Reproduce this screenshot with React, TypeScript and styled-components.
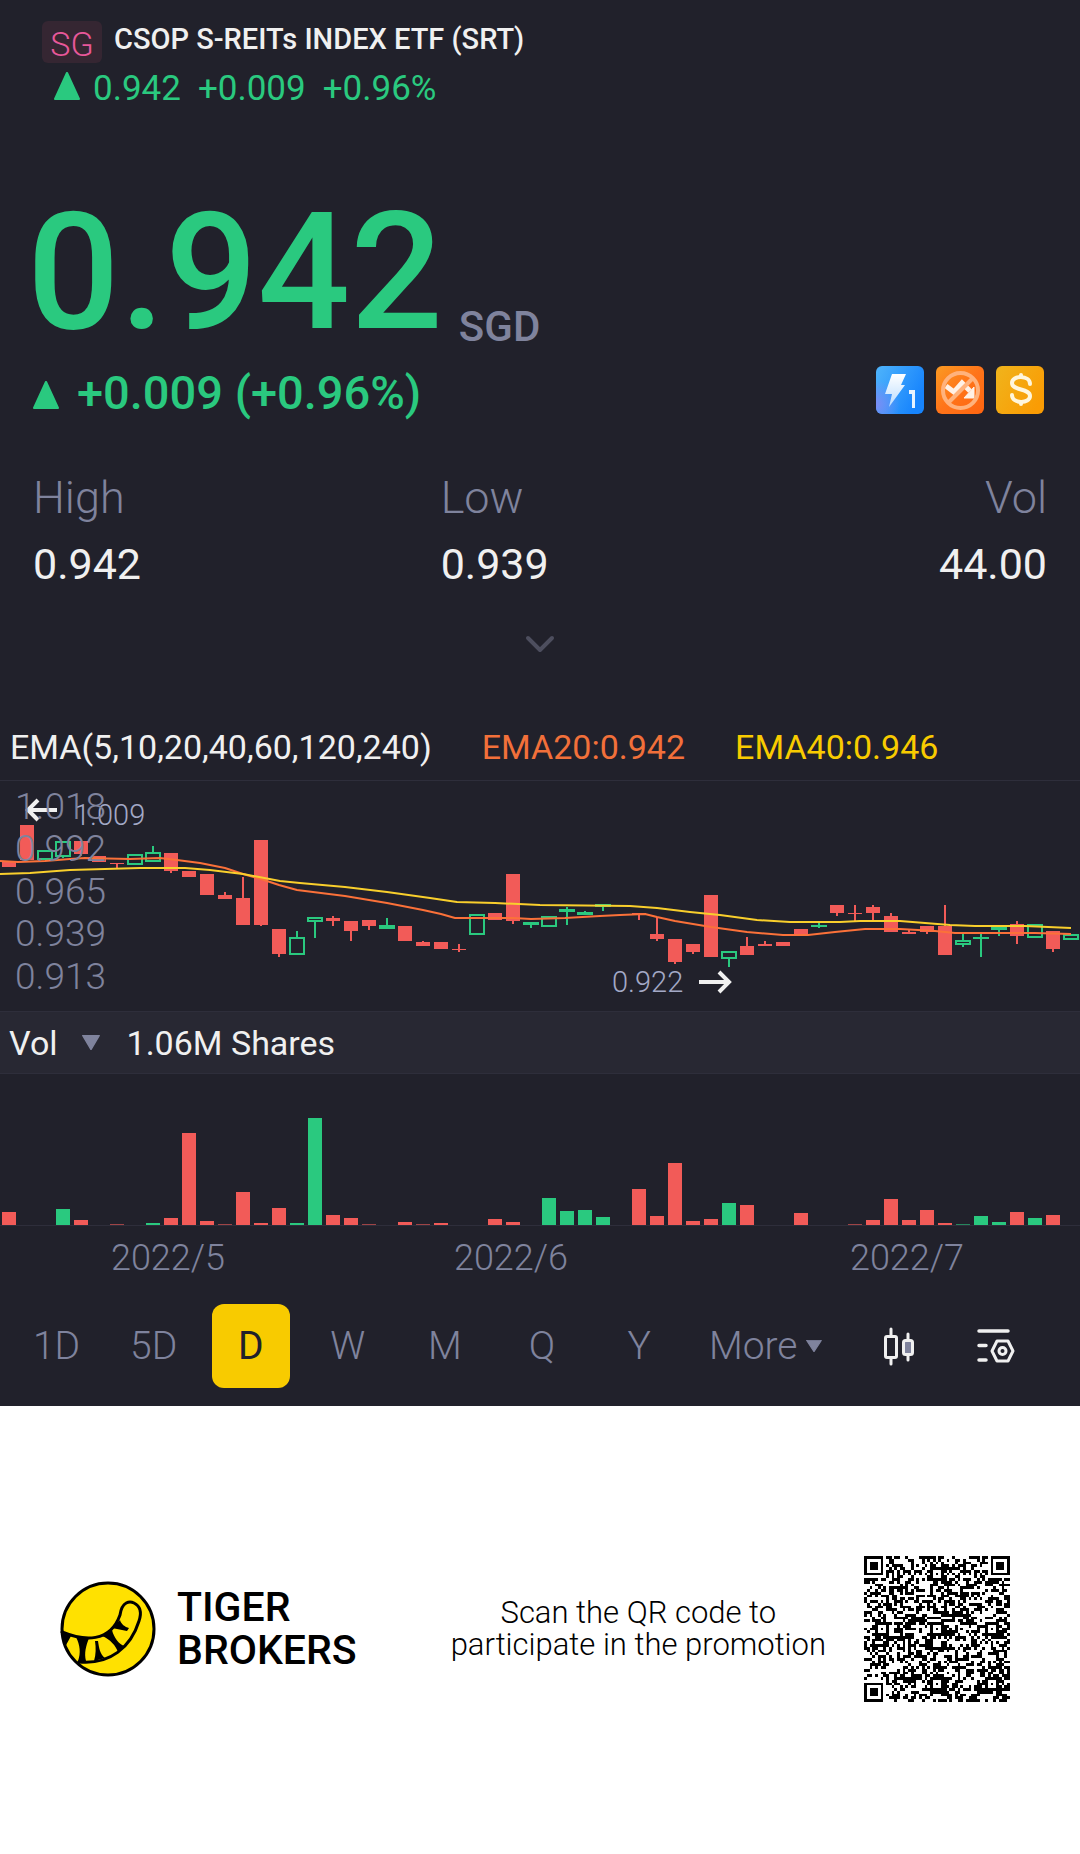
import React from "react";
import styled, { createGlobalStyle } from "styled-components";

const color = {
  bg: "#21212b",
  band: "#282833",
  line: "#2e2e3b",
  muted: "#7f839d",
  mark: "#a3a9c6",
  text: "#f0f0f0",
  up: "#2ac97f",
  down: "#f25b58",
  orange: "#f2703a",
  yellow: "#f8cb00",
};

const font = `Roboto, "Noto Sans", "Liberation Sans", sans-serif`;

const GlobalStyle = createGlobalStyle`
  * { box-sizing: border-box; }
  body { margin: 0; background: #fff; font-family: ${font}; }
  h1, p, dl, dt, dd { margin: 0; font-weight: inherit; }
  button { font: inherit; color: inherit; background: none; border: 0; padding: 0; cursor: pointer; }
  svg { display: block; flex: none; }
`;

const Panel = styled.main`
  background: ${color.bg};
  color: ${color.text};
`;

const TopBar = styled.header`
  padding: 21px 42px 0;
`;

const TitleRow = styled.div`
  display: flex;
  align-items: flex-start;
  gap: 12px;
`;

const Market = styled.span`
  width: 60px;
  height: 42px;
  border-radius: 6px;
  background: #352632;
  color: #e8589a;
  font-size: 34px;
  font-weight: 300;
  line-height: 46px;
  text-align: center;
`;

const Title = styled.h1`
  font-size: 29px;
  font-weight: 500;
  line-height: 36px;
`;

const Ticker = styled.div`
  display: flex;
  align-items: baseline;
  gap: 17px;
  margin-top: 5px;
  padding-left: 12px;
  color: ${color.up};
  font-size: 35px;
  font-weight: 400;
  line-height: 42px;
`;

const Arrowed = styled.span`
  display: inline-flex;
  align-items: baseline;
  gap: 13px;
`;

const Quote = styled.section`
  padding: 77px 36px 0 27px;
`;

const PriceRow = styled.div`
  display: flex;
  align-items: flex-end;
  gap: 16px;
`;

const Price = styled.p`
  color: ${color.up};
  font-size: 163px;
  font-weight: 500;
  line-height: 172px;
`;

const Currency = styled.span`
  color: ${color.muted};
  font-size: 42px;
  font-weight: 500;
  line-height: 64px;
`;

const ChangeRow = styled.div`
  display: flex;
  align-items: flex-start;
  justify-content: space-between;
  height: 60px;
  margin-top: 2px;
`;

const Change = styled.div`
  display: flex;
  align-items: baseline;
  gap: 18px;
  padding-left: 6px;
  color: ${color.up};
  font-size: 47px;
  font-weight: 500;
  line-height: 64px;
`;

const Badges = styled.div`
  display: flex;
  gap: 12px;
  padding-top: 5px;
`;

const Stats = styled.dl`
  display: grid;
  grid-template-columns: 80fr 60fr 59fr;
  padding: 43px 33px 0;
`;

const Stat = styled.div<{ $end?: boolean }>`
  text-align: ${(p) => (p.$end ? "right" : "left")};
  line-height: 67px;
`;

const StatName = styled.dt`
  color: ${color.muted};
  font-size: 45px;
  font-weight: 300;
`;

const StatValue = styled.dd`
  font-size: 43px;
  font-weight: 400;
`;

const Expand = styled.button`
  display: flex;
  align-items: center;
  justify-content: center;
  width: 100%;
  height: 92px;
`;

const Legend = styled.div`
  display: flex;
  align-items: center;
  gap: 50px;
  height: 91px;
  padding: 24px 10px 0;
  border-bottom: 1px solid ${color.line};
  font-size: 34px;
  line-height: 40px;
  white-space: nowrap;
`;

const Tint = styled.span<{ $c: string }>`
  color: ${(p) => p.$c};
`;

const Chart = styled.svg`
  width: 100%;
  height: auto;
`;

const VolumeBar = styled.div`
  display: flex;
  align-items: center;
  height: 63px;
  padding: 0 9px;
  background: ${color.band};
  border-top: 1px solid ${color.line};
  border-bottom: 1px solid ${color.line};
  font-size: 34px;
  line-height: 60px;
`;

const VolumePick = styled.button`
  display: flex;
  align-items: center;
  gap: 24px;
  margin-right: 27px;
`;

const Periods = styled.nav`
  display: grid;
  grid-template-columns: repeat(7, 97fr) 163fr repeat(2, 97fr);
  align-items: center;
  justify-items: center;
  padding: 16px 35px 18px 8px;
`;

const Period = styled.button<{ $on?: boolean }>`
  display: flex;
  align-items: center;
  justify-content: center;
  gap: 8px;
  min-width: 78px;
  height: 84px;
  border-radius: 12px;
  background: ${(p) => (p.$on ? color.yellow : "transparent")};
  color: ${(p) => (p.$on ? color.bg : color.muted)};
  font-size: 39px;
  font-weight: ${(p) => (p.$on ? 400 : 300)};
  line-height: 84px;
`;

const MorePeriods = styled(Period)`
  padding-right: 8px;
`;

const Footer = styled.footer`
  display: flex;
  align-items: center;
  gap: 38px;
  padding: 150px 70px 152px 60px;
  background: #fff;
  color: #000;
`;

const Brand = styled.div`
  display: flex;
  align-items: center;
  gap: 21px;
  margin-right: auto;
  font-size: 41px;
  font-weight: 500;
  line-height: 43px;
`;

const Invite = styled.p`
  font-size: 31px;
  font-weight: 300;
  line-height: 32px;
  text-align: center;
`;

const Triangle = ({ w, h, down, fill }: { w: number; h: number; down?: boolean; fill: string }) => (
  <svg width={w} height={h} viewBox="0 0 24 28" preserveAspectRatio="none" aria-hidden="true">
    <path
      d={down ? "M1 1H23L12 27Z" : "M1 27H23L12 1Z"}
      fill={fill}
      stroke={fill}
      strokeWidth="2"
      strokeLinejoin="round"
    />
  </svg>
);

type Candle = [number, "r" | "g", number, number, number, number];

// index, colour, wick top, body top, body bottom, wick bottom
const candles: Candle[] = [
  [0, "r", 142, 142, 147, 147], [1, "r", 105, 105, 140, 140], [2, "g", 130, 130, 140, 140],
  [3, "g", 121, 121, 137, 138], [4, "r", 121, 121, 134, 136], [5, "r", 136, 136, 142, 142],
  [6, "r", 143, 143, 144, 148], [7, "g", 134, 134, 145, 145], [8, "g", 126, 132, 142, 142],
  [9, "r", 133, 133, 151, 153], [10, "r", 151, 151, 157, 157], [11, "r", 154, 154, 175, 175],
  [12, "r", 172, 175, 179, 179], [13, "r", 157, 178, 205, 205], [14, "r", 120, 120, 205, 206],
  [15, "r", 209, 209, 234, 237], [16, "g", 211, 217, 235, 235], [17, "g", 197, 197, 202, 218],
  [18, "r", 196, 198, 201, 206], [19, "r", 201, 201, 211, 221], [20, "r", 200, 200, 206, 210],
  [21, "g", 198, 205, 209, 209], [22, "r", 206, 206, 221, 221], [23, "r", 221, 222, 226, 226],
  [24, "r", 222, 222, 229, 229], [25, "r", 224, 229, 230, 232], [26, "g", 194, 194, 215, 215],
  [27, "r", 193, 193, 200, 200], [28, "r", 154, 154, 201, 204], [29, "g", 202, 202, 205, 208],
  [30, "g", 196, 196, 207, 207], [31, "g", 187, 189, 192, 205], [32, "g", 191, 192, 195, 195],
  [33, "g", 184, 184, 187, 191], [35, "r", 193, 193, 195, 200], [36, "r", 197, 214, 219, 221],
  [37, "r", 219, 219, 242, 244], [38, "r", 224, 224, 232, 234], [39, "r", 175, 175, 237, 237],
  [40, "g", 231, 231, 239, 247], [41, "r", 217, 226, 235, 235], [42, "r", 221, 224, 226, 226],
  [43, "r", 222, 222, 226, 226], [44, "r", 209, 209, 216, 216], [45, "g", 203, 205, 207, 208],
  [46, "r", 185, 185, 193, 196], [47, "r", 185, 193, 194, 201], [48, "r", 185, 187, 193, 201],
  [49, "r", 193, 196, 212, 212], [50, "r", 210, 212, 214, 214], [51, "r", 206, 206, 212, 214],
  [52, "r", 185, 206, 235, 235], [53, "g", 214, 220, 225, 227], [54, "g", 214, 217, 219, 237],
  [55, "g", 205, 207, 210, 216], [56, "r", 201, 204, 216, 224], [57, "g", 204, 204, 218, 218],
  [58, "r", 211, 211, 229, 232], [59, "g", 214, 214, 220, 220],
];

const ema20 =
  "0,141 18,142 45,141 70,139 85,138 130,139 160,138 177,140 200,143 225,148 243,154 261,159 279,165 297,170 345,176 387,183 423,190 441,194 455,198 513,198 531,199 565,198 600,196 620,195 645,194 657,197 675,201 693,204 711,207 747,212 783,215 808,215 835,212 865,209 900,209 918,210 935,211 955,213 1035,213 1071,214";
const ema40 =
  "0,154 30,153 70,150 140,148 185,148 210,150 243,154 280,161 300,163 345,167 387,172 430,178 457,182 495,183 540,185 630,186 657,188 690,192 720,195 757,200 790,202 840,202 860,201 900,201 925,203 950,205 975,206 1025,206 1071,208";

// index, colour, height
const volumes: [number, "r" | "g", number][] = [
  [0, "r", 13], [3, "g", 16], [4, "r", 5], [6, "r", 1], [8, "g", 2], [9, "r", 7], [10, "r", 92],
  [11, "r", 4], [12, "r", 1], [13, "r", 33], [14, "r", 2], [15, "r", 17], [16, "g", 2],
  [17, "g", 107], [18, "r", 10], [19, "r", 7], [20, "r", 1], [22, "r", 3], [23, "r", 1],
  [24, "r", 2], [27, "r", 6], [28, "r", 3], [30, "g", 27], [31, "g", 14], [32, "g", 15],
  [33, "g", 8], [35, "r", 36], [36, "r", 9], [37, "r", 62], [38, "r", 4], [39, "r", 6],
  [40, "g", 22], [41, "r", 20], [44, "r", 12], [47, "r", 1], [48, "r", 5], [49, "r", 26],
  [50, "r", 5], [51, "r", 15], [52, "r", 2], [53, "g", 1], [54, "g", 9], [55, "g", 3],
  [56, "r", 13], [57, "g", 7], [58, "r", 10],
];

const CandleMark = ({ c }: { c: Candle }) => {
  const [i, kind, wt, bt, bb, wb] = c;
  const x = 9 + 18 * i;
  const tone = kind === "r" ? color.down : color.up;
  const hollow = kind === "g" && bb - bt > 4;
  return (
    <g fill={tone} stroke="none">
      {wt < bt && <rect x={x - 1} y={wt} width="2" height={bt - wt} />}
      {wb > bb && <rect x={x - 1} y={bb} width="2" height={wb - bb} />}
      {hollow ? (
        <rect x={x - 7} y={bt + 1} width="14" height={bb - bt - 2} fill="none" stroke={tone} strokeWidth="2" />
      ) : (
        <rect x={kind === "g" ? x - 8 : x - 7} y={bt} width={kind === "g" ? 16 : 14} height={bb - bt} />
      )}
    </g>
  );
};

const PriceChart = () => (
  <Chart viewBox="0 61 1080 230" role="img" aria-label="Daily candles with EMA20 and EMA40">
    {candles.map((c) => (
      <CandleMark key={c[0]} c={c} />
    ))}
    <g fill="none" strokeWidth="2" strokeLinejoin="round">
      <polyline points={ema20} stroke="#fb7139" />
      <polyline points={ema40} stroke="#f9cf2c" />
    </g>
    <g fontFamily={font} fontWeight="300">
      <g stroke={color.text} strokeWidth="4" fill="none">
        <path d="M57 90H30M38 80L28 90L38 100" />
        <path d="M699 262H728M719 252L729 262L719 272" />
      </g>
      <g fontSize="29" fill={color.mark}>
        <text x="74" y="105">1.009</text>
        <text x="612" y="272">0.922</text>
      </g>
      <g fontSize="37" fill={color.muted}>
        <text x="15" y="99">1.018</text>
        <text x="15" y="141">0.992</text>
        <text x="15" y="184">0.965</text>
        <text x="15" y="226">0.939</text>
        <text x="15" y="269">0.913</text>
      </g>
    </g>
  </Chart>
);

const VolumeChart = () => (
  <Chart viewBox="0 0 1080 214" role="img" aria-label="Daily volume">
    {volumes.map(([i, kind, h]) => (
      <rect
        key={i}
        x={2 + 18 * i}
        y={151 - h}
        width="14"
        height={h}
        fill={kind === "r" ? color.down : color.up}
        opacity={h < 2 ? 0.6 : 1}
      />
    ))}
    <rect x="0" y="151" width="1080" height="1" fill={color.line} />
    <g fontFamily={font} fontWeight="300" fontSize="36" fill={color.muted} textAnchor="middle">
      <text x="168" y="196">2022/5</text>
      <text x="511" y="196">2022/6</text>
      <text x="907" y="196">2022/7</text>
    </g>
  </Chart>
);

const LevelIcon = () => (
  <svg width="48" height="48" viewBox="0 0 48 48" role="img" aria-label="Level 1 quotes">
    <defs>
      <linearGradient id="lv" x1="0" y1="0" x2="1" y2="0.5">
        <stop offset="0" stopColor="#4fb4fb" />
        <stop offset="1" stopColor="#1784fd" />
      </linearGradient>
      <radialGradient id="lv2" cx="0" cy="0.8" r="0.5">
        <stop offset="0" stopColor="#7a8cf5" />
        <stop offset="1" stopColor="#7a8cf5" stopOpacity="0" />
      </radialGradient>
      <linearGradient id="lv3" x1="0" y1="0" x2="0" y2="1">
        <stop offset="0" stopColor="#fff" />
        <stop offset="1" stopColor="#b8dcff" />
      </linearGradient>
    </defs>
    <rect width="48" height="48" rx="6" fill="url(#lv)" />
    <rect width="48" height="48" rx="6" fill="url(#lv2)" />
    <path d="M16 8H30L25 19H29L13 41L16 28H9Z" fill="url(#lv3)" />
    <path d="M33 24H39V42H36V28H33Z" fill="#e8f4ff" />
  </svg>
);

const NoShortIcon = () => (
  <svg width="48" height="48" viewBox="0 0 48 48" role="img" aria-label="No short selling">
    <defs>
      <linearGradient id="ns" x1="0" y1="0" x2="1" y2="1">
        <stop offset="0" stopColor="#fb9a22" />
        <stop offset="0.5" stopColor="#ff7419" />
        <stop offset="1" stopColor="#ff6410" />
      </linearGradient>
    </defs>
    <rect width="48" height="48" rx="6" fill="url(#ns)" />
    <path d="M10 20L18 26L26 17L34 25" fill="none" stroke="#fff1e6" strokeWidth="5" />
    <path d="M38 21V32H28Z" fill="#fff1e6" stroke="#fff1e6" strokeWidth="1" />
    <g fill="none" stroke="#ffb27c" strokeWidth="4">
      <circle cx="24.500" cy="24.500" r="17.500" />
      <path d="M37 12L12 37" />
    </g>
  </svg>
);

const DollarIcon = () => (
  <svg width="48" height="48" viewBox="0 0 48 48" role="img" aria-label="Dividends">
    <defs>
      <linearGradient id="dl" x1="0" y1="0" x2="1" y2="0.6">
        <stop offset="0" stopColor="#f0b41c" />
        <stop offset="1" stopColor="#fa9c04" />
      </linearGradient>
    </defs>
    <rect width="48" height="48" rx="6" fill="url(#dl)" />
    <g fill="none" stroke="#fff6dc" strokeWidth="4" strokeLinecap="round">
      <path d="M34 18C34 9 16 9 16 17C16 25 34 22 34 30C34 38 16 38 16 29" />
      <path d="M25 9V11M25 36V38" />
    </g>
  </svg>
);

const CandleIcon = () => (
  <svg width="32" height="40" viewBox="0 0 32 40" fill="none" stroke="#f0f0f0" strokeWidth="3" strokeLinecap="round" aria-hidden="true">
    <path d="M8 3V9M8 33V38M25 8V14M25 30V34" />
    <rect x="2.500" y="10.500" width="11" height="21" rx="1.500" />
    <rect x="20.500" y="14.500" width="9" height="14" rx="2" fill={color.muted} />
  </svg>
);

const SettingsIcon = () => (
  <svg width="38" height="36" viewBox="0 0 38 36" fill="none" stroke="#f0f0f0" strokeWidth="3.500" strokeLinecap="round" strokeLinejoin="round" aria-hidden="true">
    <path d="M2 3H31M2 17.500H9M2 32H9" />
    <path d="M20 13H31L36 23L31 33H20L15 23Z" strokeWidth="3" />
    <circle cx="25.500" cy="23" r="3.500" strokeWidth="3" />
  </svg>
);

const TigerLogo = () => (
  <svg width="96" height="96" viewBox="0 0 96 96" aria-hidden="true">
    <circle cx="48" cy="48" r="46" fill="#ffe100" />
    <g fill="none" stroke="#000" strokeWidth="3" strokeLinecap="round" strokeLinejoin="round">
      <path d="M2 51C24 60 50 62 60 34C62 20 70 20 74 22C82 26 81 34 79 40C71 66 50 84 19 81" />
    </g>
    <path d="M2 50L11 55L5 66ZM16 56L29 57C26 65 24 72 26 80L18 80C21 72 20 64 16 56ZM35 60L38 60C39 67 40 73 45 77L34 80C36 73 36 67 35 60ZM42 55L52 49C54 57 59 63 64 65L58 71C56 65 50 58 42 55ZM52 47L60 39C61 43 65 46 69 47L67 50C62 49 57 48 52 47Z" fill="#000" />
    <circle cx="48" cy="48" r="46" fill="none" stroke="#000" strokeWidth="3" />
  </svg>
);

const QR_SIZE = 53;

const ring = (x: number, y: number, cx: number, cy: number) => Math.max(Math.abs(x - cx), Math.abs(y - cy));

function qrPath() {
  let seed = 20220719;
  let d = "";
  const finders = [[3, 3], [QR_SIZE - 4, 3], [3, QR_SIZE - 4]];
  const aligns = [[26, 6], [6, 26], [26, 26], [46, 26], [26, 46], [46, 46]];
  for (let y = 0; y < QR_SIZE; y++) {
    for (let x = 0; x < QR_SIZE; x++) {
      seed = (Math.imul(seed, 1664525) + 1013904223) >>> 0;
      let on = seed / 4294967296 < 0.5;
      if (x === 6) on = y % 2 === 0;
      if (y === 6) on = x % 2 === 0;
      for (const [cx, cy] of aligns) {
        const r = ring(x, y, cx, cy);
        if (r <= 2) on = r !== 1;
      }
      for (const [cx, cy] of finders) {
        const r = ring(x, y, cx, cy);
        if (r <= 4) on = r !== 2 && r !== 4;
      }
      if (on) d += `M${x} ${y}h1v1h-1z`;
    }
  }
  return d;
}

const QrCode = () => (
  <svg width="146" height="146" viewBox={`0 0 ${QR_SIZE} ${QR_SIZE}`} shapeRendering="crispEdges" role="img" aria-label="QR code">
    <path d={qrPath()} fill="#000" />
  </svg>
);

const periods = ["1D", "5D", "D", "W", "M", "Q", "Y"];

export default function App() {
  const [period, setPeriod] = React.useState("D");
  return (
    <>
      <GlobalStyle />
      <Panel>
        <TopBar>
          <TitleRow>
            <Market>SG</Market>
            <Title>CSOP S-REITs INDEX ETF (SRT)</Title>
          </TitleRow>
          <Ticker>
            <Arrowed>
              <Triangle w={26} h={28} fill={color.up} />
              0.942
            </Arrowed>
            <span>+0.009</span>
            <span>+0.96%</span>
          </Ticker>
        </TopBar>

        <Quote>
          <PriceRow>
            <Price>0.942</Price>
            <Currency>SGD</Currency>
          </PriceRow>
          <ChangeRow>
            <Change>
              <Triangle w={26} h={28} fill={color.up} />
              +0.009 (+0.96%)
            </Change>
            <Badges>
              <LevelIcon />
              <NoShortIcon />
              <DollarIcon />
            </Badges>
          </ChangeRow>
        </Quote>

        <Stats>
          <Stat>
            <StatName>High</StatName>
            <StatValue>0.942</StatValue>
          </Stat>
          <Stat>
            <StatName>Low</StatName>
            <StatValue>0.939</StatValue>
          </Stat>
          <Stat $end>
            <StatName>Vol</StatName>
            <StatValue>44.00</StatValue>
          </Stat>
        </Stats>

        <Expand aria-label="Show more figures">
          <svg width="30" height="18" viewBox="0 0 30 18" fill="none" stroke="#4d4e5e" strokeWidth="4" strokeLinecap="round" strokeLinejoin="round">
            <path d="M3 3L15 15L27 3" />
          </svg>
        </Expand>

        <Legend>
          <span>EMA(5,10,20,40,60,120,240)</span>
          <Tint $c={color.orange}>EMA20:0.942</Tint>
          <Tint $c={color.yellow}>EMA40:0.946</Tint>
        </Legend>
        <PriceChart />

        <VolumeBar>
          <VolumePick>
            Vol
            <Triangle w={18} h={15} down fill={color.muted} />
          </VolumePick>
          <span>1.06M Shares</span>
        </VolumeBar>
        <VolumeChart />

        <Periods aria-label="Chart period">
          {periods.map((p) => (
            <Period key={p} $on={p === period} aria-pressed={p === period} onClick={() => setPeriod(p)}>
              {p}
            </Period>
          ))}
          <MorePeriods>
            More
            <Triangle w={16} h={12} down fill={color.muted} />
          </MorePeriods>
          <Period aria-label="Chart style">
            <CandleIcon />
          </Period>
          <Period aria-label="Chart settings">
            <SettingsIcon />
          </Period>
        </Periods>
      </Panel>

      <Footer>
        <Brand>
          <TigerLogo />
          <span>
            TIGER
            <br />
            BROKERS
          </span>
        </Brand>
        <Invite>
          Scan the QR code to
          <br />
          participate in the promotion
        </Invite>
        <QrCode />
      </Footer>
    </>
  );
}
